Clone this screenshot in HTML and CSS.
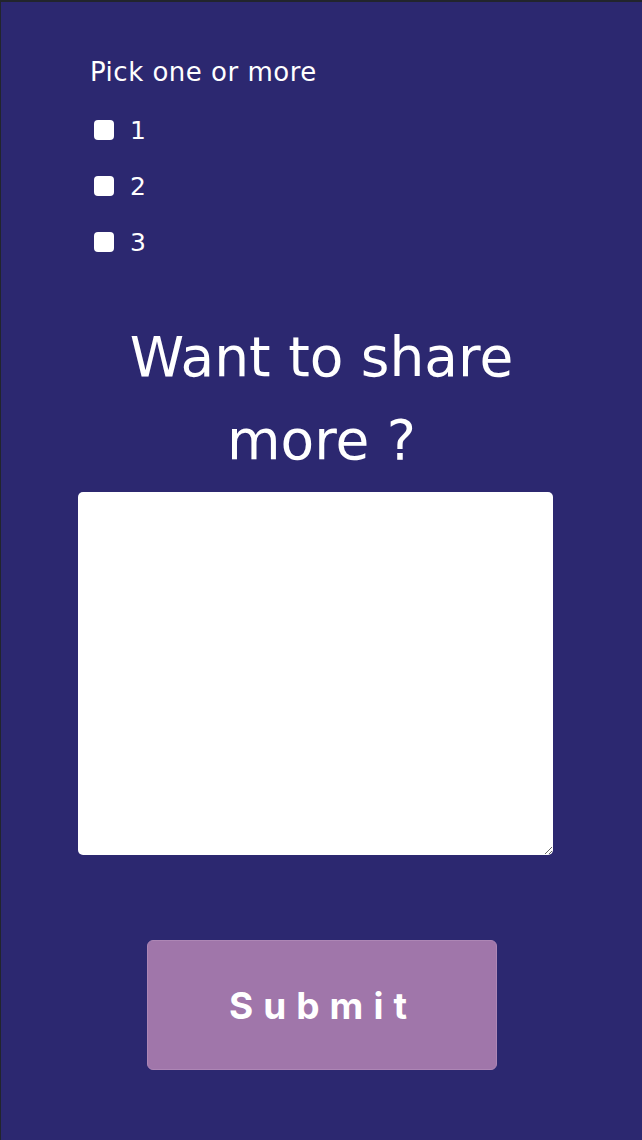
FILE: index.html
```html
<!DOCTYPE html>
<html lang="en">
<head>
<meta charset="utf-8">
<title>Survey</title>
<link rel="stylesheet" href="styles.css">
</head>
<body>
<main class="page">
  <form class="survey">
    <fieldset class="group">
      <legend class="group-title">Pick one or more</legend>
      <label class="option"><input type="checkbox" class="box" name="pick" value="1"><span>1</span></label>
      <label class="option"><input type="checkbox" class="box" name="pick" value="2"><span>2</span></label>
      <label class="option"><input type="checkbox" class="box" name="pick" value="3"><span>3</span></label>
    </fieldset>
    <h2 class="heading">Want to share<br>more ?</h2>
    <textarea class="comments" name="comments"></textarea>
    <button type="submit" class="submit">Submit</button>
  </form>
</main>
</body>
</html>
```

FILE: styles.css
```css
html, body {
  margin: 0;
  padding: 0;
  background: #22252d;
}
.page {
  margin: 2px 0 0 1px;
  min-height: 1138px;
  background: #2c2870;
  color: #ffffff;
  font-family: "DejaVu Sans", "Noto Sans", sans-serif;
}
.survey {
  display: flex;
  flex-direction: column;
  align-items: center;
  padding: 55px 0 60px;
}
.group {
  align-self: flex-start;
  margin: 0 0 0 89px;
  padding: 0;
  border: 0;
  display: flex;
  flex-direction: column;
}
.group-title {
  padding: 0;
  font-size: 26px;
  letter-spacing: 0.5px;
  line-height: 30px;
  margin-bottom: 15px;
  float: left;
}
.option {
  display: flex;
  align-items: center;
  height: 56px;
  font-size: 25px;
  gap: 16px;
  padding-left: 4px;
}
.box {
  appearance: none;
  -webkit-appearance: none;
  margin: 0;
  width: 20px;
  height: 20px;
  background: #ffffff;
  border-radius: 4px;
  border: 0;
}
.heading {
  margin: 46px 0 0;
  font-size: 55px;
  font-weight: 400;
  line-height: 83px;
  text-align: center;
}
.comments {
  align-self: flex-start;
  margin: 10px 0 0 77px;
  width: 475px;
  height: 363px;
  box-sizing: border-box;
  border: 0;
  border-radius: 5px;
  background: #ffffff;
  resize: both;
}
.submit {
  margin-top: 85px;
  width: 350px;
  height: 130px;
  background: #a076aa;
  border: 1px solid #ad86b5;
  border-radius: 6px;
  color: #ffffff;
  font-family: Inter, "Liberation Sans", sans-serif;
  font-weight: 700;
  font-size: 37px;
  letter-spacing: 10px;
  padding: 0 0 0 3px;
}
```
